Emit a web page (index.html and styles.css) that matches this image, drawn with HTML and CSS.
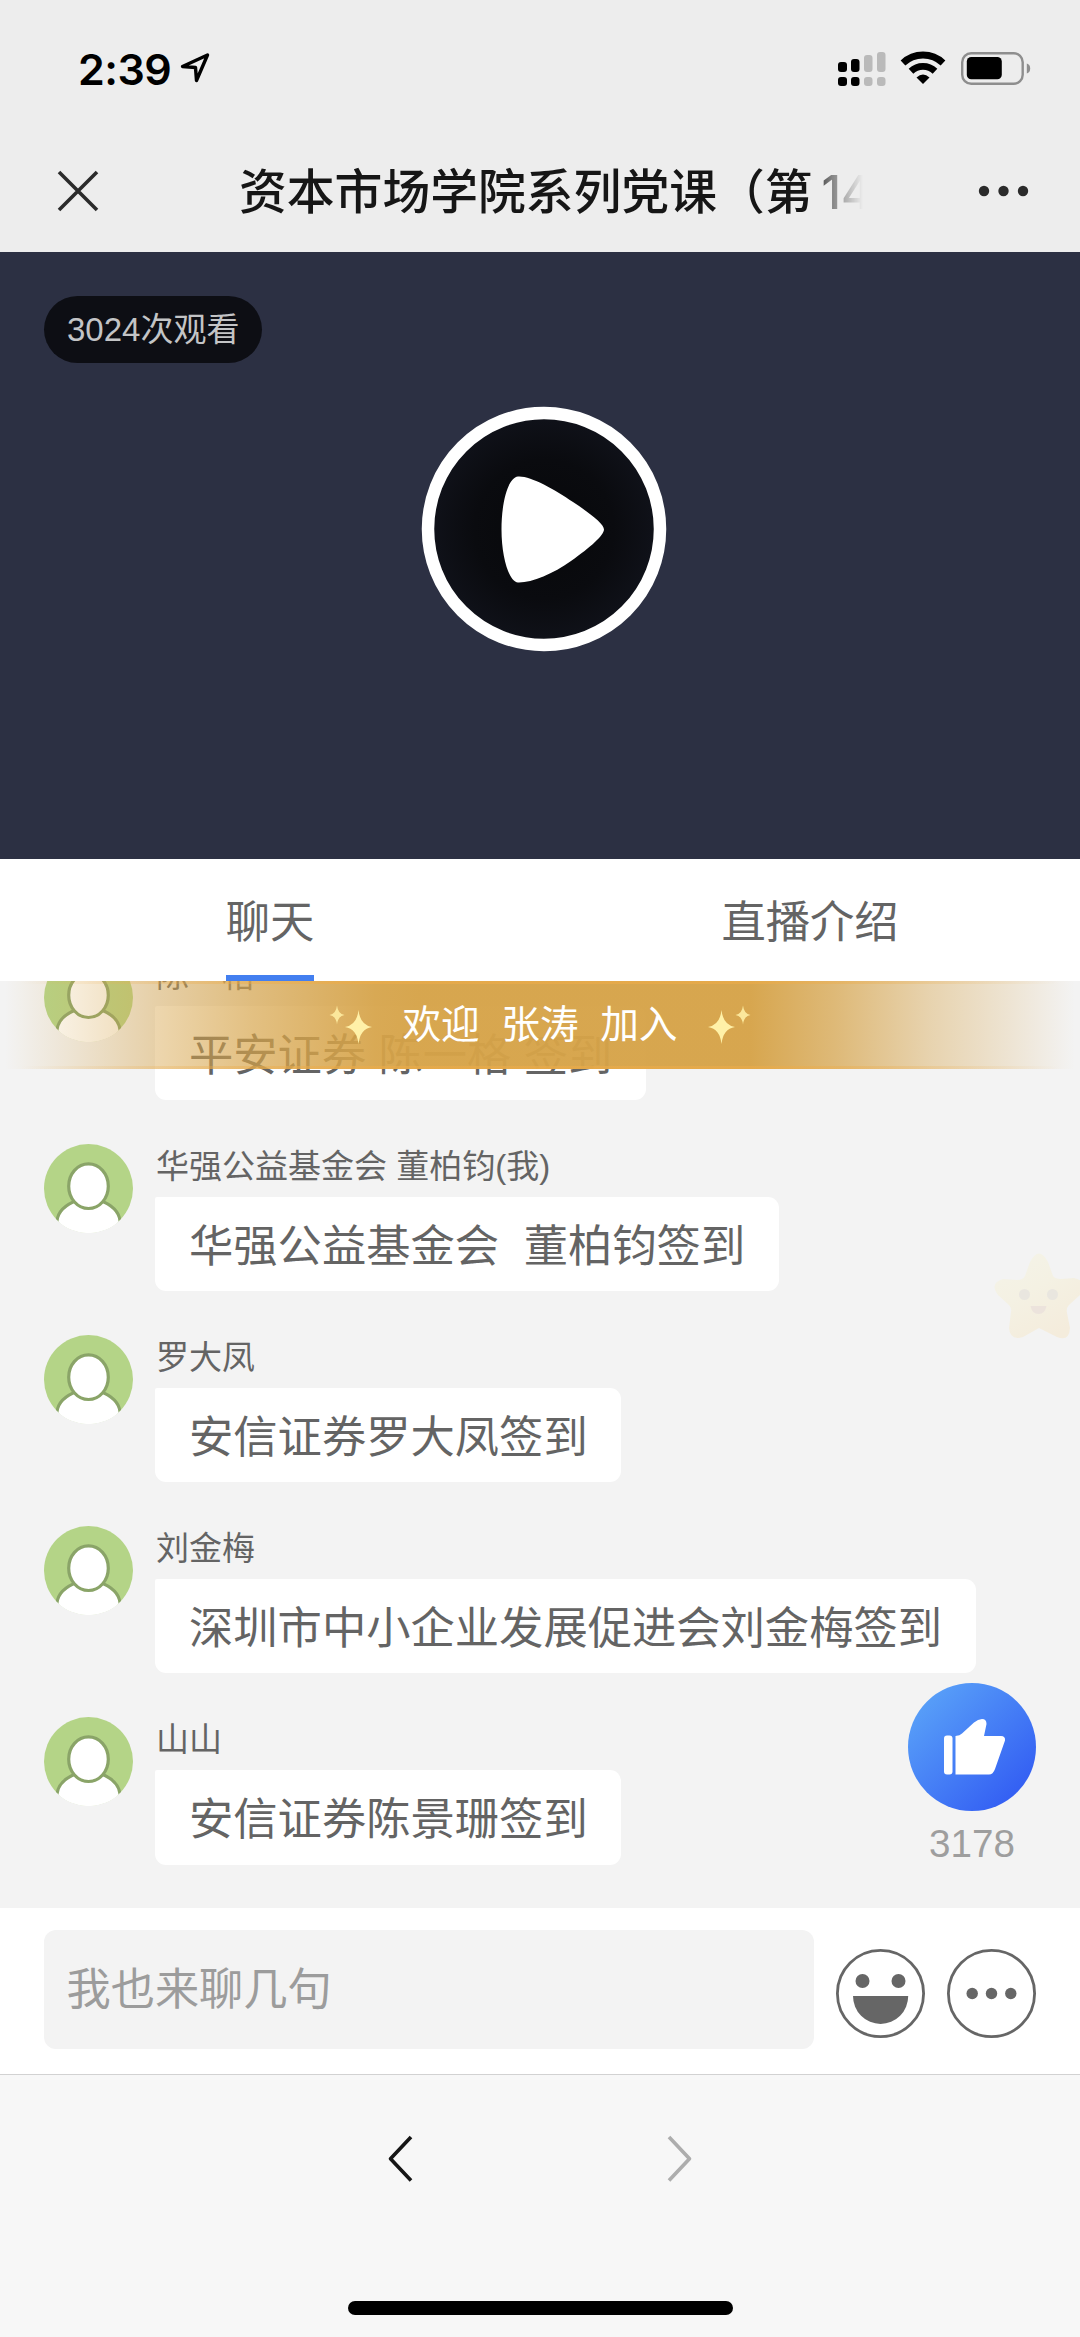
FILE: index.html
```html
<!DOCTYPE html>
<html lang="zh-CN">
<head>
<meta charset="utf-8">
<title>资本市场学院系列党课</title>
<link rel="stylesheet" href="styles.css">
</head>
<body>
<svg class="defs" width="0" height="0" aria-hidden="true">
  <defs>
    <clipPath id="avatar-clip"><circle cx="44.5" cy="44.5" r="44.5"/></clipPath>
    <symbol id="avatar" viewBox="0 0 89 89">
      <g clip-path="url(#avatar-clip)">
        <rect width="89" height="89" fill="#b4d487"/>
        <path d="M13 92V77C14 66 23 60 34 56H55C66 60 75 66 76 77V92Z" fill="#fff" stroke="#8aa468" stroke-width="3"/>
        <path d="M14.500 77V89H74.500V77Z" fill="#fff"/>
        <path d="M0 79H89V89H0Z" fill="#fff"/>
        <ellipse cx="44.5" cy="42.2" rx="19.8" ry="22.300" fill="#fff" stroke="#8aa468" stroke-width="3.200"/>
      </g>
    </symbol>
    <symbol id="sparkle" viewBox="0 0 44 44" overflow="visible">
      <path d="M27.500 11Q29 26 41 28Q29 30 27.500 45Q26 30 14 28Q26 26 27.500 11Z" fill="#fff1a8"/>
      <path d="M6 6.500Q7 15 13.500 16Q7 17 6 25.500Q5 17 -1.500 16Q5 15 6 6.500Z" fill="#fbe79b"/>
    </symbol>
  </defs>
</svg>

<div class="screen">
  <header class="header">
    <div class="status">
      <span class="time">2:39</span>
      <svg class="location" width="30" height="32" viewBox="0 0 30 32"><path d="M2.500 14.500L27.500 3L16.500 28.500L15.500 15.500Z" fill="none" stroke="#000" stroke-width="3.400" stroke-linejoin="round"/></svg>
      <svg class="indicators" width="194" height="40" viewBox="836 48 194 40">
        <g>
          <rect x="837" y="62" width="9" height="10" rx="3"/>
          <rect x="850" y="59" width="8.500" height="13" rx="3"/>
          <rect x="837" y="77" width="9" height="9" rx="3"/>
          <rect x="850" y="77" width="8.500" height="9" rx="3"/>
        </g>
        <g fill="#bababa">
          <rect x="863" y="55" width="8.500" height="17" rx="3"/>
          <rect x="876" y="52" width="8.500" height="20" rx="3"/>
          <rect x="863" y="77" width="8.500" height="9" rx="3"/>
          <rect x="876" y="77" width="8.500" height="9" rx="3"/>
        </g>
        <g fill="none" stroke="#000" stroke-width="6.800">
          <path d="M902 63A29 29 0 0 1 942 63"/>
          <path d="M910 71.200A17.500 17.500 0 0 1 934 71.200"/>
        </g>
        <path d="M922 84L915.500 77.500Q922 71.500 928.500 77.500Z"/>
        <rect x="961.200" y="53.200" width="60.500" height="30.500" rx="9" fill="none" stroke="#8e8e8e" stroke-width="2.400"/>
        <rect x="965.800" y="57" width="35" height="22.300" rx="4.500"/>
        <path d="M1025.800 63.500Q1029.200 64.500 1029.200 68.500T1025.800 73.500Z" fill="#8e8e8e"/>
      </svg>
    </div>
    <div class="titlebar">
      <svg class="close" width="44" height="44" viewBox="0 0 44 44"><path d="M3 3L41 41M41 3L3 41" stroke="#2b2b2b" stroke-width="3.600"/></svg>
      <h1 class="title">资本市场学院系列党课（第<span class="session">14</span></h1>
      <svg class="menu" width="52" height="12" viewBox="0 0 52 12" fill="#2b2b2b"><circle cx="6" cy="6" r="5.200"/><circle cx="25.500" cy="6" r="5.200"/><circle cx="45" cy="6" r="5.200"/></svg>
    </div>
  </header>

  <section class="video">
    <span class="views">3024次观看</span>
    <svg class="play" width="246" height="246" viewBox="0 0 246 246">
      <defs><radialGradient id="disc"><stop offset="0" stop-color="#07080a"/><stop offset=".6" stop-color="#0a0b0f"/><stop offset="1" stop-color="#10121a"/></radialGradient></defs>
      <circle cx="123" cy="123" r="116" fill="url(#disc)" stroke="#fff" stroke-width="12.500"/>
      <path d="M97 70.500C109 69.500 133 83 152 96C170 108 183 118 183 123.500C183 129 170 141 150 155C132 168 110 177 97 176.500C88 176 80.500 151 80.500 123.500C80.500 96 87 71.500 97 70.500Z" fill="#fff"/>
    </svg>
  </section>

  <nav class="tabs">
    <a class="tab tab-active">聊天</a>
    <a class="tab">直播介绍</a>
  </nav>

  <main class="chat">
    <article class="message">
      <svg class="avatar"><use href="#avatar"/></svg>
      <div class="body"><div class="name">陈一格</div><div class="bubble">平安证券 陈一格 签到</div></div>
    </article>
    <article class="message">
      <svg class="avatar"><use href="#avatar"/></svg>
      <div class="body"><div class="name">华强公益基金会 董柏钧(我)</div><div class="bubble">华强公益基金会  董柏钧签到</div></div>
    </article>
    <article class="message">
      <svg class="avatar"><use href="#avatar"/></svg>
      <div class="body"><div class="name">罗大凤</div><div class="bubble">安信证券罗大凤签到</div></div>
    </article>
    <article class="message">
      <svg class="avatar"><use href="#avatar"/></svg>
      <div class="body"><div class="name">刘金梅</div><div class="bubble">深圳市中小企业发展促进会刘金梅签到</div></div>
    </article>
    <article class="message">
      <svg class="avatar"><use href="#avatar"/></svg>
      <div class="body"><div class="name">山山</div><div class="bubble">安信证券陈景珊签到</div></div>
    </article>

    <div class="welcome">
      <svg class="spark" width="44" height="44"><use href="#sparkle"/></svg>
      <span class="welcome-text">欢迎  张涛  加入</span>
      <svg class="spark spark-flip" width="44" height="44"><use href="#sparkle"/></svg>
    </div>

    <svg class="star" width="90" height="90" viewBox="0 0 90 90">
      <defs><linearGradient id="star-fill" x1="0" y1="0" x2=".6" y2="1"><stop offset="0" stop-color="#f4f3e8"/><stop offset=".5" stop-color="#f4f1e3"/><stop offset="1" stop-color="#f4ecdc"/></linearGradient></defs>
      <path d="M36 9Q45 -8 54 9L59 23Q61 26 67 26L80 25Q97 29 86 42L75 52Q72 55 73 60L76 75Q75 89 63 84L45 75L29 84Q16 88 15 75L17 59Q18 55 15 52L4 42Q-5 30 9 26L23 27Q29 27 31 23Z" fill="url(#star-fill)"/>
      <g fill="#e9e6df"><circle cx="30.500" cy="41.500" r="5.500"/><circle cx="58.500" cy="41.500" r="5.500"/></g>
      <path d="M36.500 53H52.500Q51 61 44.500 61T36.500 53Z" fill="#ece3dc"/>
    </svg>

    <div class="like">
      <svg width="128" height="128" viewBox="0 0 128 128">
        <defs><linearGradient id="like-fill" x1=".1" y1=".15" x2=".85" y2=".9"><stop offset="0" stop-color="#589ff8"/><stop offset="1" stop-color="#335ef3"/></linearGradient></defs>
        <circle cx="64" cy="64" r="64" fill="url(#like-fill)"/>
        <rect x="36" y="52.500" width="8.500" height="39" rx="3" fill="#fff"/>
        <path d="M47.500 53Q52 52.500 54 50.500L66 39.500Q70 36 74 36Q78.500 36 78.500 41L76 53H93Q97.500 53 97 57.500L87 86Q85 91.500 81 91.500H47.500Z" fill="#fff"/>
      </svg>
      <span class="like-count">3178</span>
    </div>
  </main>

  <div class="composer">
    <div class="input">我也来聊几句</div>
    <svg width="89" height="89" viewBox="0 0 89 89"><circle cx="44.500" cy="44.500" r="43.100" fill="none" stroke="#666" stroke-width="2.800"/><g fill="#666"><circle cx="26.500" cy="32" r="7"/><circle cx="62.500" cy="32" r="7"/><path d="M17 47H72.200A27.600 28 0 0 1 17 47Z"/></g></svg>
    <svg width="89" height="89" viewBox="0 0 89 89"><circle cx="44.500" cy="44.500" r="43.100" fill="none" stroke="#666" stroke-width="2.800"/><g fill="#666"><circle cx="25.200" cy="44.500" r="5.700"/><circle cx="44.500" cy="44.500" r="5.700"/><circle cx="63.800" cy="44.500" r="5.700"/></g></svg>
  </div>

  <footer class="footer">
    <div class="history">
      <svg width="28" height="50" viewBox="0 0 28 50"><path d="M25 3L4.500 24.700L25 46.500" fill="none" stroke="#161616" stroke-width="3.600" stroke-linejoin="round"/></svg>
      <svg width="28" height="50" viewBox="0 0 28 50"><path d="M3 3L23.500 24.700L3 46.500" fill="none" stroke="#adadad" stroke-width="3.600" stroke-linejoin="round"/></svg>
    </div>
    <div class="home"></div>
  </footer>
</div>
</body>
</html>
```

FILE: styles.css
```css
* { box-sizing: border-box; }

body {
  margin: 0;
  background: #f7f7f7;
  font-family: "Liberation Sans", "Noto Sans CJK SC", sans-serif;
  color: #646464;
}

svg { display: block; flex: none; }
.defs { position: absolute; }

.screen {
  display: flex;
  flex-direction: column;
  width: 1080px;
  height: 2337px;
  overflow: hidden;
}

/* Header */
.header {
  height: 252px;
  background: #ededed;
}
.status {
  display: flex;
  align-items: center;
  height: 138px;
  padding: 0 49px 0 78px;
}
.time {
  width: 102px;
  color: #000;
  font: 600 43px/1 Inter, sans-serif;
  letter-spacing: -0.5px;
}
.location { margin-top: -3px; }
.indicators { margin: -2px 0 0 auto; }
.titlebar {
  display: flex;
  align-items: center;
  height: 106px;
  padding: 0 50px 0 56px;
}
.title {
  width: 624px;
  margin: -2px 0 0 139px;
  overflow: hidden;
  white-space: nowrap;
  color: #161616;
  font: 500 47.8px/70px "Noto Sans CJK SC", sans-serif;
  -webkit-mask-image: linear-gradient(90deg, #000 570px, rgba(0, 0, 0, .5) 592px, transparent 624px);
  mask-image: linear-gradient(90deg, #000 570px, rgba(0, 0, 0, .5) 592px, transparent 624px);
}
.session {
  margin-left: 9px;
  font-family: Inter, sans-serif;
  font-size: 47px;
  font-weight: 500;
}
.menu { margin-left: auto; }

/* Video */
.video {
  display: flex;
  flex-direction: column;
  align-items: flex-start;
  height: 607px;
  padding: 44px;
  background: #2c3043;
}
.views {
  height: 67px;
  padding: 0 23px;
  border-radius: 34px;
  background: #0d0e14;
  color: #c3c4c6;
  font-size: 33px;
  line-height: 67px;
}
.play { margin: 43px 0 0 376.500px; }

/* Tabs */
.tabs {
  display: grid;
  grid-template-columns: 1fr 1fr;
  justify-items: center;
  height: 122px;
  background: #fff;
}
.tab {
  height: 122px;
  font-size: 44.3px;
  line-height: 127px;
}
.tab-active { border-bottom: 6px solid #437ff0; }

/* Chat */
.chat {
  position: relative;
  display: flex;
  flex-direction: column;
  justify-content: flex-end;
  gap: 43.5px;
  height: 927px;
  padding: 0 44px 43.5px;
  overflow: hidden;
  background: #f3f3f3;
}
.message {
  display: flex;
  flex: none;
  gap: 22px;
  height: 147.6px;
}
.avatar {
  width: 89px;
  height: 89px;
}
.body {
  display: flex;
  flex-direction: column;
  align-items: flex-start;
}
.name {
  height: 53px;
  padding-left: 1px;
  font-size: 33px;
  line-height: 46px;
  white-space: pre;
}
.bubble {
  height: 94.6px;
  padding: 0 33.5px 0 34px;
  border-radius: 2px 11px 11px 11px;
  background: #fff;
  font-size: 44.3px;
  line-height: 99px;
  white-space: pre;
}

.welcome {
  position: absolute;
  top: 0;
  left: 0;
  display: flex;
  align-items: center;
  justify-content: center;
  gap: 27px;
  width: 1080px;
  height: 88px;
  background:
    linear-gradient(90deg, transparent 20px, rgba(238, 172, 72, .6) 350px, rgba(238, 172, 72, .6) 730px, transparent 1060px) 0 0 / 100% 3px no-repeat,
    linear-gradient(90deg, transparent 20px, rgba(238, 172, 72, .6) 350px, rgba(238, 172, 72, .6) 730px, transparent 1060px) 0 100% / 100% 3px no-repeat,
    linear-gradient(90deg,
      rgba(214, 163, 72, 0) 5px,
      rgba(214, 163, 72, .2) 75px,
      rgba(214, 163, 72, .44) 155px,
      rgba(214, 163, 72, .68) 250px,
      rgba(214, 163, 72, .82) 320px,
      rgba(214, 163, 72, .93) 375px,
      rgba(214, 163, 72, .96) 420px,
      rgba(214, 163, 72, .96) 750px,
      rgba(214, 163, 72, .72) 835px,
      rgba(214, 163, 72, .4) 930px,
      rgba(214, 163, 72, .2) 1005px,
      rgba(214, 163, 72, 0) 1075px);
}
.welcome-text {
  color: #fff;
  font-size: 38.7px;
  line-height: 90px;
  white-space: pre;
}
.spark { margin-top: -8px; overflow: visible; }
.spark-flip { transform: scaleX(-1); }

.star {
  position: absolute;
  top: 272px;
  left: 994px;
}

.like {
  position: absolute;
  top: 702px;
  left: 908px;
  display: flex;
  flex-direction: column;
  align-items: center;
}
.like-count {
  margin-top: 10.5px;
  color: #9e9e9e;
  font-size: 38.6px;
  line-height: 44px;
}

/* Composer */
.composer {
  display: flex;
  align-items: center;
  gap: 22px;
  height: 166px;
  padding: 5px 44px 0;
  background: #fff;
}
.input {
  width: 770.5px;
  height: 119px;
  margin-top: -8px;
  padding-left: 22.5px;
  border-radius: 12px;
  background: #f3f3f3;
  color: #9c9c9c;
  font-size: 44.2px;
  line-height: 119px;
}

/* Footer */
.footer {
  display: flex;
  flex: 1;
  flex-direction: column;
  justify-content: space-between;
  align-items: center;
  padding: 59px 0 22px;
  border-top: 1px solid #d2d2d2;
  background: #f7f7f7;
}
.history {
  display: flex;
  gap: 252px;
}
.home {
  width: 385px;
  height: 14px;
  border-radius: 7px;
  background: #000;
}
```
